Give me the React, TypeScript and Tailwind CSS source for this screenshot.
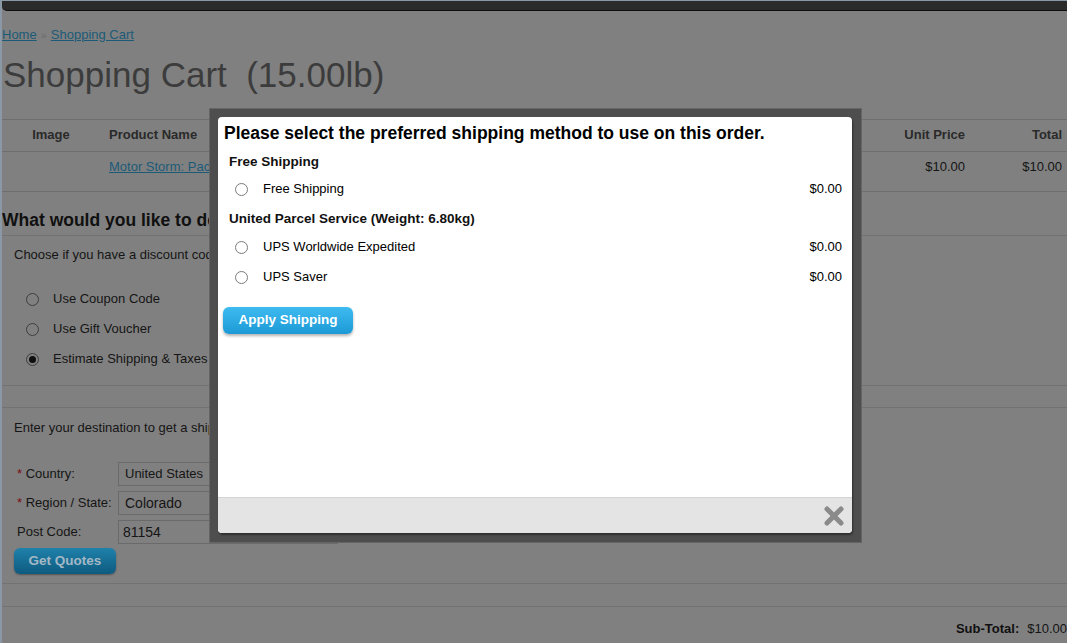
import React from "react";

function PageRadio({ checked = false }: { checked?: boolean }) {
  return (
    <span className="w-[13px] h-[13px] rounded-full border border-[#3e3e3e] bg-[#808080] flex items-center justify-center shrink-0">
      {checked && <span className="w-[7px] h-[7px] rounded-full bg-[#0e0e0e]" />}
    </span>
  );
}

function ModalRadio() {
  return <span className="w-[13px] h-[13px] rounded-full border border-[#7a7a7a] bg-white shrink-0" />;
}

function ShipRow({ label, price }: { label: string; price: string }) {
  return (
    <div className="h-[30px] flex items-center pl-[17px] pr-[10px] text-[13px] text-black">
      <ModalRadio />
      <span className="ml-[15px] flex-1">{label}</span>
      <span>{price}</span>
    </div>
  );
}

export default function App() {
  return (
    <div className="relative w-[1067px] h-[643px] overflow-hidden bg-[#808080] border-l-2 border-t border-[#8b99a7] font-['Liberation_Sans',Arial,sans-serif] text-[13px] text-[#151515]">
      {/* top bar */}
      <div className="h-[10px] bg-[#2b2b2b] border-b border-[#0f0f0f] rounded-bl-[5px]" />

      {/* breadcrumb */}
      <div className="mt-[16px] h-[16px] leading-[16px] text-[13px] flex items-center">
        <span className="text-[#1c5b78] underline">Home</span>
        <span className="mx-[4px] text-[#6c6c6c] text-[11px]">»</span>
        <span className="text-[#1c5b78] underline">Shopping Cart</span>
      </div>

      {/* title */}
      <h1 className="mt-[12px] h-[40px] leading-[40px] text-[35px] text-[#3c3c3c] pl-[1px]">
        Shopping Cart{"\u00a0\u00a0"}(15.00lb)
      </h1>

      {/* cart table */}
      <div className="mt-[24px] border-t border-[#6e6e6e]">
        <div className="h-[32px] grid grid-cols-[98px_1fr_120px_97px] items-start pt-[7px] leading-[16px] font-bold text-[#2a2a2a] border-b border-[#6e6e6e]">
          <span className="text-center">Image</span>
          <span className="pl-[9px]">Product Name</span>
          <span className="text-right pr-[5px]">Unit Price</span>
          <span className="text-right pr-[5px]">Total</span>
        </div>
        <div className="h-[40px] grid grid-cols-[98px_1fr_120px_97px] items-start pt-[7px] leading-[16px] border-b border-[#6e6e6e]">
          <span />
          <span className="pl-[9px] text-[#1c5b78] underline">Motor Storm: Pacific Rift</span>
          <span className="text-right pr-[5px]">$10.00</span>
          <span className="text-right pr-[5px]">$10.00</span>
        </div>
      </div>

      {/* next section */}
      <h2 className="pt-[18px] pb-[5px] h-[44px] leading-[20px] text-[17.5px] font-bold text-[#101010] border-b border-[#727272]">
        What would you like to do next?
      </h2>
      <p className="mt-[11px] pl-[12px] leading-[16px]">
        Choose if you have a discount code or reward points you want to use or would like to estimate your delivery cost.
      </p>
      <div className="mt-[21px] pl-[24px] flex flex-col">
        {[
          ["Use Coupon Code", false],
          ["Use Gift Voucher", false],
          ["Estimate Shipping & Taxes", true],
        ].map(([label, checked]) => (
          <div key={label as string} className="h-[30px] flex items-center">
            <PageRadio checked={checked as boolean} />
            <span className="ml-[14px]">{label as string}</span>
          </div>
        ))}
      </div>
      <div className="mt-[11px] border-t border-[#727272]" />
      <div className="mt-[21px] border-t border-[#727272]" />

      <p className="mt-[12px] pl-[12px] leading-[16px]">
        Enter your destination to get a shipping estimate.
      </p>

      <div className="mt-[26px] pl-[15px] flex flex-col gap-[5px]">
        <div className="h-[24px] flex items-center">
          <span className="w-[101px]"><span className="text-[#7a1010]">*</span> Country:</span>
          <div className="w-[220px] h-[24px] border border-[#6a6a6a] flex items-center pl-[6px]">United States</div>
        </div>
        <div className="h-[24px] flex items-center">
          <span className="w-[101px]"><span className="text-[#7a1010]">*</span> Region / State:</span>
          <div className="w-[220px] h-[24px] border border-[#6a6a6a] flex items-center pl-[6px] text-[14px]">Colorado</div>
        </div>
        <div className="h-[24px] flex items-center">
          <span className="w-[101px]">Post Code:</span>
          <div className="w-[220px] h-[24px] border border-[#6a6a6a] flex items-center pl-[4px] text-[14px]">81154</div>
        </div>
      </div>
      <div className="mt-[4px] pl-[12px]">
        <div className="w-[102px] h-[26px] rounded-[6px] bg-gradient-to-b from-[#1f82ab] to-[#0e5a7f] shadow-[0_1px_2px_rgba(0,0,0,0.35)] flex items-center justify-center text-[13.5px] font-bold text-[#a3b8c6]">
          Get Quotes
        </div>
      </div>
      <div className="mt-[9px] border-t border-[#727272]" />
      <div className="mt-[22px] border-t border-[#727272]" />
      <div className="mt-[14px] flex justify-end h-[16px] leading-[16px]">
        <span className="font-bold text-[#101010]">Sub-Total:</span>
        <span className="ml-[8px]">$10.00</span>
      </div>

      {/* modal */}
      <div className="absolute left-[207px] top-[107px] w-[653px] h-[435px] bg-[#4e4e4e] border border-[#656565] pl-[8px] pt-[8px] pr-[9px] pb-[9px]">
        <div className="w-full h-full bg-white rounded-[4px] overflow-hidden flex flex-col shadow-[1px_2px_2px_rgba(0,0,0,0.4)]">
          <div className="flex-1">
            <div className="pt-[6px] pl-[6px] h-[26px] leading-[20px] text-[17.5px] font-bold text-black whitespace-nowrap">
              Please select the preferred shipping method to use on this order.
            </div>
            <div className="mt-[11px] pl-[11px] h-[16px] leading-[16px] text-[13.5px] font-bold text-[#111]">Free Shipping</div>
            <div className="mt-[4px]">
              <ShipRow label="Free Shipping" price="$0.00" />
            </div>
            <div className="mt-[7px] pl-[11px] h-[16px] leading-[16px] text-[13.5px] font-bold text-[#111]">
              United Parcel Service (Weight: 6.80kg)
            </div>
            <div className="mt-[5px]">
              <ShipRow label="UPS Worldwide Expedited" price="$0.00" />
              <ShipRow label="UPS Saver" price="$0.00" />
            </div>
            <div className="mt-[15px] pl-[5px]">
              <div className="w-[130px] h-[27px] rounded-[6px] bg-gradient-to-b from-[#3dbbf0] to-[#1b9ad6] shadow-[0_2px_3px_rgba(0,0,0,0.3)] flex items-center justify-center text-[13.5px] font-bold text-white">
                Apply Shipping
              </div>
            </div>
          </div>
          <div className="h-[36px] bg-[#e4e4e4] border-t border-[#d4d4d4] flex items-center justify-end pr-[8px]">
            <svg width="20" height="20" viewBox="0 0 20 20">
              <path d="M3 3 L17 17 M17 3 L3 17" stroke="#8a8a8a" strokeWidth="5" strokeLinecap="round" />
            </svg>
          </div>
        </div>
      </div>
    </div>
  );
}
